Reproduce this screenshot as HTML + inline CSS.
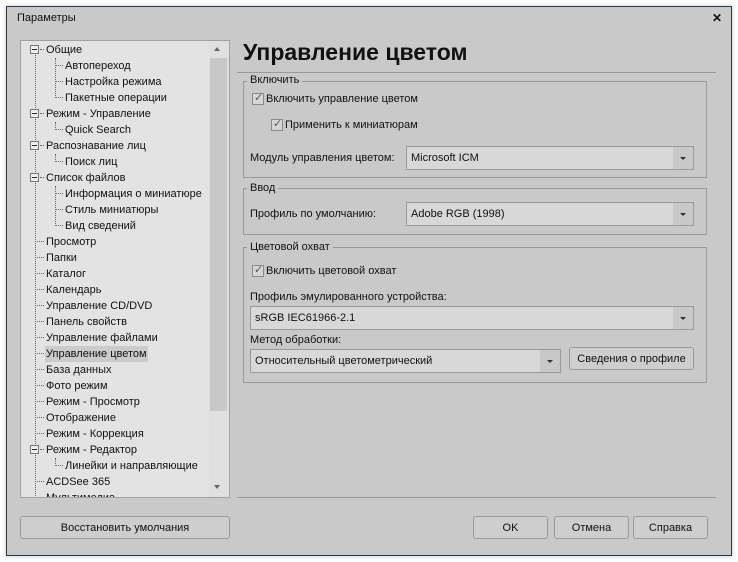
<!DOCTYPE html>
<html><head><meta charset="utf-8"><style>
*{box-sizing:border-box;margin:0;padding:0}
body{width:738px;height:562px;background:#fff;font-family:"Liberation Sans",sans-serif;font-size:11px;color:#111;position:relative;overflow:hidden}
.a{position:absolute}
.win{left:6px;top:6px;width:726px;height:550px;background:#c9c9c9;border:1px solid #2a3a4a;box-shadow:0 0 4px rgba(0,0,0,.25)}
.tree{left:20px;top:40px;width:210px;height:458px;background:#e3e3e3;border:1px solid #a0a0a0;overflow:hidden}
.it{position:absolute;height:16px;line-height:16px;white-space:nowrap}
.vl{position:absolute;border-left:1px dotted #666;width:0}
.hl{position:absolute;border-top:1px dotted #666;height:0}
.bx{position:absolute;width:9px;height:9px;border:1px solid #777;background:#eee}
.bx:after{content:"";position:absolute;left:1px;top:3px;width:5px;height:1px;background:#222}
.grp{border:1px solid #9a9a9a}
.gl{background:#c9c9c9;padding:0 3px;line-height:13px}
.cb{width:12px;height:12px;border:1px solid #8a8a8a;background:#d6d6d6}
.combo{height:24px;background:#d8d8d8;border:1px solid #9a9a9a;line-height:23px;padding-left:4px}
.combo i{position:absolute;right:0;top:0;width:20px;height:22px;background:#c8c8c8}
.combo i:after{content:"";position:absolute;left:7px;top:10px;border-left:3px solid transparent;border-right:3px solid transparent;border-top:3px solid #333}
.btn{height:23px;border:1px solid #9a9a9a;border-radius:3px;background:#cecece;text-align:center;line-height:22px}
</style></head><body>
<div class="a win"></div>
<div class="a" style="left:17px;top:12px;font-size:11px">Параметры</div>
<div class="a" style="left:712px;top:11px;font-size:12px;font-weight:bold">✕</div>

<div class="a tree">
<div class="a" style="left:188px;top:0;width:20px;height:456px;background:#e0e0e0"></div>
<div class="a" style="left:189px;top:17px;width:17px;height:353px;background:#c8c8c8"></div>
<div class="a" style="left:193px;top:6px;border-left:3px solid transparent;border-right:3px solid transparent;border-bottom:4px solid #666"></div>
<div class="a" style="left:193px;top:444px;border-left:3px solid transparent;border-right:3px solid transparent;border-top:4px solid #666"></div>
<div class="vl" style="left:14px;top:9px;height:460px"></div>
<div class="vl" style="left:34px;top:17px;height:40px"></div>
<div class="vl" style="left:34px;top:81px;height:8px"></div>
<div class="vl" style="left:34px;top:113px;height:8px"></div>
<div class="vl" style="left:34px;top:145px;height:40px"></div>
<div class="vl" style="left:34px;top:417px;height:8px"></div>
</div>
<div class="a" style="left:20px;top:40px;width:188px;height:457px;overflow:hidden">
<div id="t"></div>
</div>
<script>
var items=[[0,"Общие",1],[1,"Автопереход"],[1,"Настройка режима"],[1,"Пакетные операции"],[0,"Режим - Управление",1],[1,"Quick Search"],[0,"Распознавание лиц",1],[1,"Поиск лиц"],[0,"Список файлов",1],[1,"Информация о миниатюре"],[1,"Стиль миниатюры"],[1,"Вид сведений"],[0,"Просмотр"],[0,"Папки"],[0,"Каталог"],[0,"Календарь"],[0,"Управление CD/DVD"],[0,"Панель свойств"],[0,"Управление файлами"],[0,"Управление цветом",0,1],[0,"База данных"],[0,"Фото режим"],[0,"Режим - Просмотр"],[0,"Отображение"],[0,"Режим - Коррекция"],[0,"Режим - Редактор",1],[1,"Линейки и направляющие"],[0,"ACDSee 365"],[0,"Мультимедиа"]];
var h="";
items.forEach(function(it,i){var y=2+i*16;var tx=it[0]?44:25;
 if(it[2]) h+='<div class="bx" style="left:10px;top:'+(y+3)+'px"></div><div class="hl" style="left:20px;top:'+(y+7)+'px;width:4px"></div>';
 else h+='<div class="hl" style="left:'+(it[0]?35:15)+'px;top:'+(y+7)+'px;width:'+(it[0]?8:9)+'px"></div>';
 h+='<div class="it" style="left:'+tx+'px;top:'+y+'px;padding:0 1px;'+(it[3]?'background:#cbcbcb;':'')+'">'+it[1]+'</div>';});
document.getElementById('t').innerHTML=h;
</script>

<div class="a" style="left:243px;top:39px;font-size:23px;font-weight:bold">Управление цветом</div>
<div class="a" style="left:237px;top:72px;width:479px;height:1px;background:#999"></div>

<div class="a grp" style="left:243px;top:81px;width:464px;height:97px"></div>
<div class="a gl" style="left:247px;top:74px">Включить</div>
<div class="a cb" style="left:252px;top:93px"></div><div class="a" style="left:254px;top:91px;font-size:11px;color:#555">✓</div>
<div class="a" style="left:266px;top:93px">Включить управление цветом</div>
<div class="a cb" style="left:271px;top:119px"></div><div class="a" style="left:273px;top:117px;font-size:11px;color:#555">✓</div>
<div class="a" style="left:285px;top:119px">Применить к миниатюрам</div>
<div class="a" style="left:250px;top:152px">Модуль управления цветом:</div>
<div class="a combo" style="left:406px;top:146px;width:288px">Microsoft ICM<i></i></div>

<div class="a grp" style="left:243px;top:188px;width:464px;height:47px"></div>
<div class="a gl" style="left:247px;top:182px">Ввод</div>
<div class="a" style="left:250px;top:208px">Профиль по умолчанию:</div>
<div class="a combo" style="left:406px;top:202px;width:288px">Adobe RGB (1998)<i></i></div>

<div class="a grp" style="left:243px;top:247px;width:464px;height:136px"></div>
<div class="a gl" style="left:247px;top:241px">Цветовой охват</div>
<div class="a cb" style="left:252px;top:265px"></div><div class="a" style="left:254px;top:263px;font-size:11px;color:#555">✓</div>
<div class="a" style="left:266px;top:265px">Включить цветовой охват</div>
<div class="a" style="left:250px;top:291px">Профиль эмулированного устройства:</div>
<div class="a combo" style="left:250px;top:306px;width:444px">sRGB IEC61966-2.1<i></i></div>
<div class="a" style="left:250px;top:334px">Метод обработки:</div>
<div class="a combo" style="left:250px;top:349px;width:311px">Относительный цветометрический<i></i></div>
<div class="a btn" style="left:569px;top:347px;width:125px">Сведения о профиле</div>

<div class="a" style="left:237px;top:497px;width:479px;height:1px;background:#999"></div>
<div class="a btn" style="left:20px;top:516px;width:210px">Восстановить умолчания</div>
<div class="a btn" style="left:473px;top:516px;width:75px">OK</div>
<div class="a btn" style="left:554px;top:516px;width:75px">Отмена</div>
<div class="a btn" style="left:633px;top:516px;width:75px">Справка</div>
</body></html>
